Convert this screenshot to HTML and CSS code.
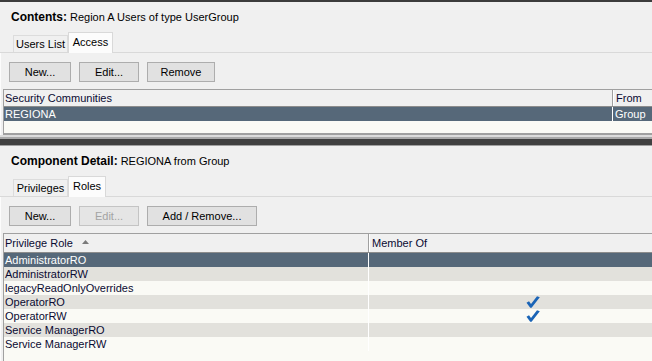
FILE: index.html
```html
<html>
  <head>
    <title>Component Detail</title>
    <link rel="stylesheet" href="styles.css">
  </head>
  <body>
    <div class="frame">
      <section class="pane">
        <div class="title"><b>Contents:</b> <span>Region A Users of type UserGroup</span></div>
        <div class="tabs">
          <span class="tab w55">Users List</span>
          <span class="tab active w45">Access</span>
        </div>
        <div class="tabbody">
          <div class="buttons">
            <button class="btn w62">New...</button>
            <button class="btn w60">Edit...</button>
            <button class="btn w68">Remove</button>
          </div>
          <div class="grid grid-top">
            <div class="head">
              <span class="cell c1">Security Communities</span>
              <span class="cell c2">From</span>
            </div>
            <div class="row sel">
              <span class="cell c1">REGIONA</span>
              <span class="cell c2">Group</span>
            </div>
            <div class="blank"></div>
          </div>
        </div>
      </section>

      <div class="splitter"></div>

      <section class="pane pane-fill">
        <div class="title"><b>Component Detail:</b> <span>REGIONA from Group</span></div>
        <div class="tabs">
          <span class="tab w55">Privileges</span>
          <span class="tab active w38">Roles</span>
        </div>
        <div class="tabbody tabbody-fill">
          <div class="buttons">
            <button class="btn w62">New...</button>
            <button class="btn w60" disabled>Edit...</button>
            <button class="btn w110">Add / Remove...</button>
          </div>
          <div class="grid grid-roles">
            <div class="head">
              <span class="cell c1">Privilege Role
                <svg class="sort" width="7" height="4" viewBox="0 0 7 4"><polygon points="0,4 3.5,0 7,4" fill="#7a7a7a"/></svg>
              </span>
              <span class="cell c2">Member Of</span>
            </div>
            <div class="row sel"><span class="cell c1">AdministratorRO</span><span class="cell c2"></span></div>
            <div class="row odd"><span class="cell c1">AdministratorRW</span><span class="cell c2"></span></div>
            <div class="row"><span class="cell c1">legacyReadOnlyOverrides</span><span class="cell c2"></span></div>
            <div class="row odd"><span class="cell c1">OperatorRO</span><span class="cell c2 check"><svg width="14" height="12" viewBox="0 0 14 12"><path d="M0.5 6.8 L3 5.2 L5 8 L11 0.3 L13.8 1.3 L5.6 11.8 L4.2 11.8 Z" fill="#1a64b6"/></svg></span></div>
            <div class="row"><span class="cell c1">OperatorRW</span><span class="cell c2 check"><svg width="14" height="12" viewBox="0 0 14 12"><path d="M0.5 6.8 L3 5.2 L5 8 L11 0.3 L13.8 1.3 L5.6 11.8 L4.2 11.8 Z" fill="#1a64b6"/></svg></span></div>
            <div class="row odd"><span class="cell c1">Service ManagerRO</span><span class="cell c2"></span></div>
            <div class="row"><span class="cell c1">Service ManagerRW</span><span class="cell c2"></span></div>
            <div class="blank fill"></div>
          </div>
        </div>
      </section>
    </div>
  </body>
</html>
```

FILE: styles.css
```css
* { box-sizing: border-box; }
body {
  margin: 0;
  background: #f0f0f0;
  font: 11px "Liberation Sans", Arial, sans-serif;
  color: #000;
  overflow: hidden;
}
.frame {
  height: 361px;
  border-top: 2px solid #3c3c3c;
  display: flex;
  flex-direction: column;
}
.pane { display: flex; flex-direction: column; flex: none; }
.pane-fill { flex: 1; min-height: 0; }

/* dark drag bar between the two panes */
.splitter {
  flex: none;
  height: 11px;
  background: linear-gradient(#dcdcdc 0 2px, #a8a8a8 2px 4px, #404040 4px 10px, #a0a0a0 10px 11px);
}

.title {
  height: 30px;
  display: flex;
  align-items: center;
  gap: 3px;
  padding-left: 11px;
}
.title b { font-size: 12px; }

.tabs {
  height: 21px;
  display: flex;
  align-items: flex-end;
  padding-left: 13px;
  border-bottom: 1px solid #d9d9d9;
}
.tab {
  height: 17px;
  display: flex;
  align-items: center;
  justify-content: center;
  border: 1px solid #dcdcdc;
  border-bottom: none;
  background: #f0f0f0;
}
.tab.active {
  height: 21px;
  margin-bottom: -1px;
  padding-bottom: 2px;
  background: #fcfcfc;
  border-color: #d9d9d9;
}
.w55 { width: 55px; }
.w45 { width: 45px; }
.w38 { width: 38px; }

.tabbody {
  padding-top: 9px;
  border-left: 1px solid #fcfcfc;
  display: flex;
  flex-direction: column;
}
.tabbody-fill { flex: 1; min-height: 0; }

.buttons {
  height: 20px;
  display: flex;
  gap: 8px;
  padding-left: 8px;
}
.btn {
  height: 20px;
  padding: 0;
  font: inherit;
  color: #000;
  background: #e1e1e1;
  border: 1px solid #adadad;
}
.btn[disabled] {
  color: #a3a3a3;
  background: #e5e5e5;
  border-color: #c4c4c4;
}
.w62 { width: 62px; }
.w60 { width: 60px; }
.w68 { width: 68px; }
.w110 { width: 110px; }

.grid {
  margin-top: 7px;
  margin-left: 2px;
  border-left: 1px solid #a0a0a0;
  border-top: 1px solid #a0a0a0;
  background: #fafaf5;
  display: flex;
  flex-direction: column;
  color: #0a0a32;
}
.grid-top { border-bottom: 2px solid #a0a0a0; }
.grid-roles { flex: 1; min-height: 0; }

.head {
  display: flex;
  background: #f0f0f0;
  border-bottom: 1px solid #8c8c8c;
  height: 17px;
}
.grid-roles .head { height: 19px; }
.head .cell { border-right: 1px solid #a0a0a0; }
.head .c2 { border-left: 1px solid #fff; border-right: none; }

.cell {
  display: flex;
  align-items: center;
  padding-left: 1px;
  white-space: nowrap;
}
.grid-top .c1 { width: 609px; }
.grid-roles .c1 { width: 365px; }
.c2 { flex: 1; padding-left: 2px; }
.row .c1 { border-right: 1px solid #fff; }

.row { height: 14px; display: flex; flex: none; }
.row.sel { background: #566879; color: #fff; }
.row.odd { background: #e2e1dc; }
.blank { height: 12px; flex: none; }
.blank.fill { flex: 1; }

.sort { margin-left: 9px; margin-top: -2px; }
.check { padding-left: 157px; align-items: flex-start; padding-top: 1px; }
```
